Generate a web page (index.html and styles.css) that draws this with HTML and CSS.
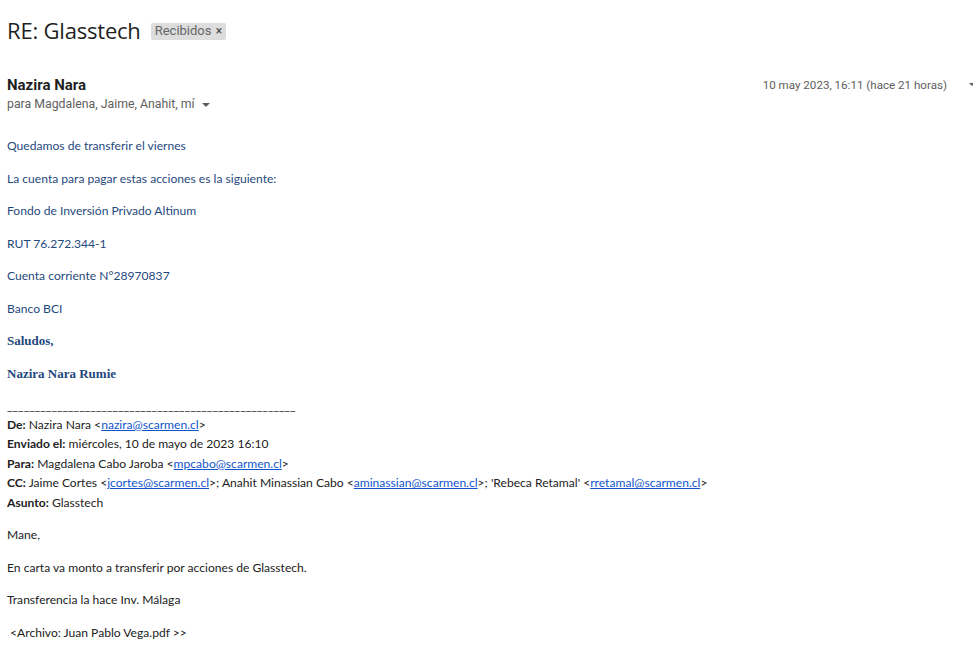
FILE: index.html
```html
<!DOCTYPE html>
<html lang="es">
<head>
<meta charset="utf-8">
<title>RE: Glasstech</title>
<link rel="stylesheet" href="styles.css">
</head>
<body>
<div class="mail">
  <div class="subject-row">
    <h1 class="subject">RE: Glasstech</h1>
    <span class="label">Recibidos <span class="label-x">×</span></span>
  </div>
  <div class="sender-row">
    <div class="sender">
      <div class="sender-name">Nazira Nara</div>
      <div class="recipients">para Magdalena, Jaime, Anahit, mí <span class="caret"></span></div>
    </div>
    <div class="date">10 may 2023, 16:11 (hace 21 horas)</div>
    <span class="more-caret"></span>
  </div>
  <div class="body">
    <p class="blue">Quedamos de transferir el viernes</p>
    <p class="blue">La cuenta para pagar estas acciones es la siguiente:</p>
    <p class="blue">Fondo de Inversión Privado Altinum</p>
    <p class="blue">RUT 76.272.344-1</p>
    <p class="blue">Cuenta corriente N°28970837</p>
    <p class="blue">Banco BCI</p>
    <p class="serif">Saludos,</p>
    <p class="serif">Nazira Nara Rumie</p>
    <div class="rule-line">____________________________________________________</div>
    <div class="hdr"><b>De:</b> Nazira Nara &lt;<a href="#">nazira@scarmen.cl</a>&gt;</div>
    <div class="hdr"><b>Enviado el:</b> miércoles, 10 de mayo de 2023 16:10</div>
    <div class="hdr"><b>Para:</b> Magdalena Cabo Jaroba &lt;<a href="#">mpcabo@scarmen.cl</a>&gt;</div>
    <div class="hdr"><b>CC:</b> Jaime Cortes &lt;<a href="#">jcortes@scarmen.cl</a>&gt;; Anahit Minassian Cabo &lt;<a href="#">aminassian@scarmen.cl</a>&gt;; 'Rebeca Retamal' &lt;<a href="#">rretamal@scarmen.cl</a>&gt;</div>
    <div class="hdr"><b>Asunto:</b> Glasstech</div>
    <p>Mane,</p>
    <p>En carta va monto a transferir por acciones de Glasstech.</p>
    <p>Transferencia la hace Inv. Málaga</p>
    <p>&nbsp;&lt;Archivo: Juan Pablo Vega.pdf &gt;&gt;</p>
  </div>
</div>
</body>
</html>
```

FILE: styles.css
```css
html, body {
  margin: 0;
  padding: 0;
  background: #ffffff;
}
body {
  font-family: Roboto, "Open Sans", Arial, sans-serif;
  color: #222222;
  overflow: hidden;
}
.mail {
  padding: 0 0 0 7px;
}
.subject-row {
  display: flex;
  align-items: center;
  height: 32px;
  margin-top: 14px;
}
.subject {
  margin: 0;
  font-size: 22px;
  font-weight: 400;
  color: #1f1f1f;
  font-family: "Open Sans", Roboto, sans-serif;
  letter-spacing: -0.2px;
}
.label {
  margin-left: 10px;
  background: #dddddd;
  color: #666666;
  font-size: 13px;
  padding: 0 4px 1px 4px;
  border-radius: 2px;
  line-height: 16px;
  margin-top: 2px;
}
.label-x {
  font-size: 12px;
  color: #444;
  margin-left: 1px;
}
.sender-row {
  display: flex;
  align-items: flex-start;
  margin-top: 30px;
  position: relative;
}
.sender {
  flex: 1;
}
.sender-name {
  font-size: 15px;
  font-weight: 700;
  color: #1f1f1f;
  line-height: 18px;
}
.recipients {
  font-size: 12.3px;
  color: #5e5e5e;
  line-height: 16px;
  margin-top: 2px;
}
.caret {
  display: inline-block;
  width: 0;
  height: 0;
  border-left: 4px solid transparent;
  border-right: 4px solid transparent;
  border-top: 4px solid #5e5e5e;
  margin-left: 4px;
  vertical-align: middle;
}
.date {
  font-size: 11.6px;
  color: #5e5e5e;
  line-height: 18px;
  margin-right: 26px;
}
.more-caret {
  position: absolute;
  right: -2px;
  top: 7px;
  width: 0;
  height: 0;
  border-left: 3px solid transparent;
  border-right: 3px solid transparent;
  border-top: 3px solid #5e5e5e;
}
.body {
  margin-top: 24px;
  font-family: Lato, "Open Sans", sans-serif;
  font-size: 12.1px;
  color: #222222;
}
.body p {
  margin: 13px 0;
  line-height: 19.5px;
}
.body p:first-child {
  margin-top: 0;
}
.body .blue {
  color: #1f497d;
}
.body .serif {
  font-family: "Liberation Serif", serif;
  font-weight: 700;
  color: #1f497d;
  font-size: 13px;
}
.rule-line {
  line-height: 19.5px;
  margin-top: 13px;
  margin-bottom: -1px;
  color: #222;
}
.hdr {
  line-height: 19.5px;
}
.hdr b {
  font-weight: 700;
}
.hdr a {
  color: #1155cc;
  text-decoration: underline;
}
```
